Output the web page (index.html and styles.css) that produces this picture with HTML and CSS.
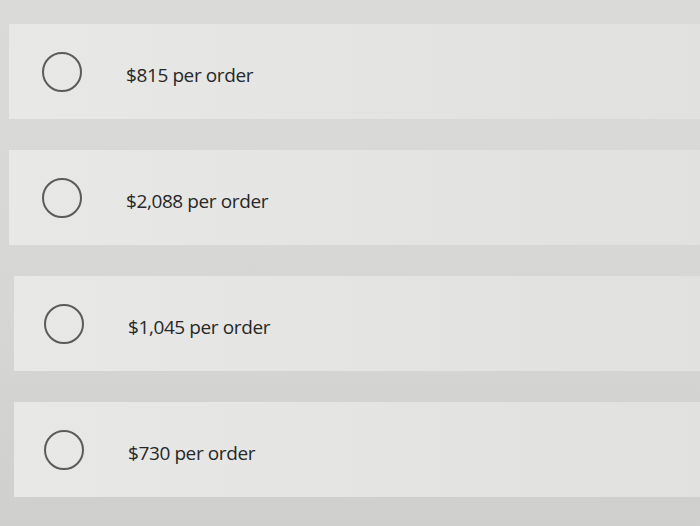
FILE: index.html
```html
<!DOCTYPE html>
<html>
<head>
<meta charset="utf-8">
<link rel="stylesheet" href="styles.css">
</head>
<body>
<div class="list">
  <div class="option">
    <span class="radio"></span>
    <span class="label">$815 per order</span>
  </div>
  <div class="option">
    <span class="radio"></span>
    <span class="label">$2,088 per order</span>
  </div>
  <div class="option shift">
    <span class="radio"></span>
    <span class="label">$1,045 per order</span>
  </div>
  <div class="option shift">
    <span class="radio"></span>
    <span class="label">$730 per order</span>
  </div>
</div>
</body>
</html>
```
FILE: styles.css
```css
html, body {
  margin: 0;
  padding: 0;
}
body {
  width: 700px;
  height: 526px;
  overflow: hidden;
  background: linear-gradient(180deg, #dadbd9 0%, #d6d7d5 60%, #cfd0cd 100%);
  font-family: "Open Sans", Lato, sans-serif;
}
.list {
  display: flex;
  flex-direction: column;
  gap: 31px;
  padding: 24px 0 0 9px;
}
.option {
  height: 95px;
  display: flex;
  align-items: center;
  background: linear-gradient(90deg, #e8e9e7 0%, #e4e5e3 50%, #e1e2e0 100%);
  padding-left: 33px;
}
.option.shift {
  margin-left: 5px;
  padding-left: 30px;
}
.radio {
  width: 36px;
  height: 36px;
  border: 2px solid #5a5b5a;
  border-radius: 50%;
  flex: none;
}
.label {
  margin-left: 44px;
  margin-top: 7px;
  font-size: 19px;
  color: #262727;
  letter-spacing: -0.4px;
}
```
